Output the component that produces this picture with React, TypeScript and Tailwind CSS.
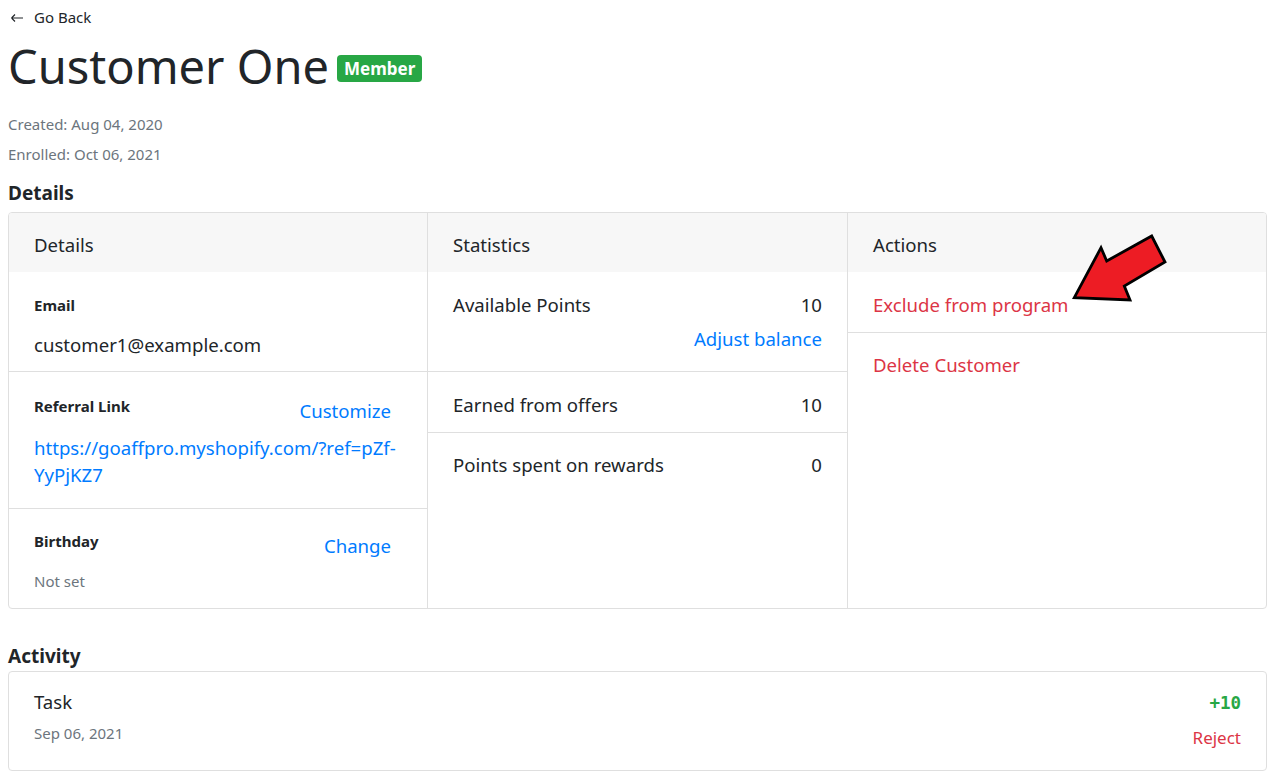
const blue = "text-[#007bff]";
const red = "text-[#dc3545]";

function PointerArrow() {
  return (
    <svg
      className="absolute left-[220px] top-[18px] pointer-events-none"
      width="104"
      height="74"
      viewBox="0 0 104 74"
    >
      <polygon
        points="6.3,66.7 33,16.7 38.7,30 83.7,5 97,31 56.3,55 62,69"
        fill="#ed1c24"
        stroke="#000"
        strokeWidth="2.8"
        strokeLinejoin="miter"
      />
    </svg>
  );
}

function BackArrow() {
  return (
    <svg width="14" height="10" viewBox="0 0 14 10" className="ml-[2px] mt-[2px]">
      <path d="M1.5 5 H13 M1.5 5 L5 1.5 M1.5 5 L5 8.5" stroke="#212529" strokeWidth="1.1" fill="none" />
    </svg>
  );
}

export default function App() {
  return (
    <div className="min-h-screen bg-white px-2 font-['Noto_Sans',sans-serif] text-[#212529]">
      {/* Back link */}
      <div className="flex items-center gap-[10px] pt-[6px] text-[15px] leading-[22px]">
        <BackArrow />
        <span>Go Back</span>
      </div>

      {/* Title */}
      <div className="flex items-center gap-[8px] mt-[6px]">
        <h1 className="text-[47px] leading-[65px] font-normal">Customer One</h1>
        <span className="mt-[4px] rounded-[4px] bg-[#28a745] px-[7px] text-[17px] leading-[27px] font-bold text-white">
          Member
        </span>
      </div>

      <div className="mt-[10px] text-[15px] leading-[30px] text-[#6c757d]">
        <p>Created: Aug 04, 2020</p>
        <p>Enrolled: Oct 06, 2021</p>
      </div>

      <h5 className="mt-[12px] text-[19px] leading-[24px] font-bold">Details</h5>

      {/* Details card */}
      <div className="mt-[7px] w-[1259px] grid grid-cols-[419px_420px_1fr] rounded-[4px] border border-[#dfdfdf] overflow-hidden">
        {/* Details column */}
        <div className="border-r border-[#dfdfdf] flex flex-col">
          <div className="bg-[#f7f7f7] px-[25px] pt-[18px] pb-[14px] text-[18.6px] leading-[27px]">Details</div>
          <div className="border-b border-[#dfdfdf] pl-[25px] pr-[36px] pt-[22px] pb-[13px]">
            <div className="text-[15px] leading-[22px] font-bold">Email</div>
            <div className="mt-[15px] text-[18.6px] leading-[27px]">customer1@example.com</div>
          </div>
          <div className="border-b border-[#dfdfdf] pl-[25px] pr-[36px] pt-[23px] pb-[20px]">
            <div className="flex items-start justify-between">
              <span className="text-[15px] leading-[22px] font-bold">Referral Link</span>
              <span className={`mt-[2px] text-[18.6px] leading-[27px] ${blue}`}>Customize</span>
            </div>
            <div className={`mt-[10px] text-[18.6px] leading-[27px] ${blue}`}>
              <span className="whitespace-nowrap">https://goaffpro.myshopify.com/?ref=pZf-</span>
              <br />
              YyPjKZ7
            </div>
          </div>
          <div className="pl-[25px] pr-[36px] pt-[21px] pb-[16px]">
            <div className="flex items-start justify-between">
              <span className="text-[15px] leading-[22px] font-bold">Birthday</span>
              <span className={`mt-[2px] text-[18.6px] leading-[27px] ${blue}`}>Change</span>
            </div>
            <div className="mt-[11px] text-[15px] leading-[22px] text-[#6c757d]">Not set</div>
          </div>
        </div>

        {/* Statistics column */}
        <div className="border-r border-[#dfdfdf] flex flex-col text-[18.6px] leading-[27px]">
          <div className="bg-[#f7f7f7] px-[25px] pt-[18px] pb-[14px]">Statistics</div>
          <div className="border-b border-[#dfdfdf] px-[25px] pt-[19px] pb-[19px]">
            <div className="flex justify-between">
              <span>Available Points</span>
              <span>10</span>
            </div>
            <div className={`mt-[7px] text-right ${blue}`}>Adjust balance</div>
          </div>
          <div className="border-b border-[#dfdfdf] px-[25px] pt-[19px] pb-[14px] flex justify-between">
            <span>Earned from offers</span>
            <span>10</span>
          </div>
          <div className="px-[25px] pt-[18px] pb-4 flex justify-between">
            <span>Points spent on rewards</span>
            <span>0</span>
          </div>
        </div>

        {/* Actions column */}
        <div className="relative flex flex-col text-[18.6px] leading-[27px]">
          <div className="bg-[#f7f7f7] px-[25px] pt-[18px] pb-[14px]">Actions</div>
          <div className={`border-b border-[#dfdfdf] px-[25px] pt-[19px] pb-[14px] ${red}`}>Exclude from program</div>
          <div className={`px-[25px] pt-[18px] pb-4 ${red}`}>Delete Customer</div>
          <PointerArrow />
        </div>
      </div>

      <h5 className="mt-[35px] text-[19px] leading-[24px] font-bold">Activity</h5>

      {/* Activity card */}
      <div className="mt-[3px] w-[1259px] rounded-[4px] border border-[#dfdfdf] flex justify-between px-[25px] pt-[16px] pb-[20px]">
        <div>
          <div className="text-[18.6px] leading-[27px]">Task</div>
          <div className="mt-[7px] text-[15px] leading-[22px] text-[#6c757d]">Sep 06, 2021</div>
        </div>
        <div className="flex flex-col items-end">
          <div className="pt-[2px] font-['DejaVu_Sans_Mono',monospace] text-[17.5px] leading-[27px] font-bold text-[#28a745]">
            +10
          </div>
          <div className={`mt-[9px] text-[17px] leading-[24px] ${red}`}>Reject</div>
        </div>
      </div>
    </div>
  );
}
